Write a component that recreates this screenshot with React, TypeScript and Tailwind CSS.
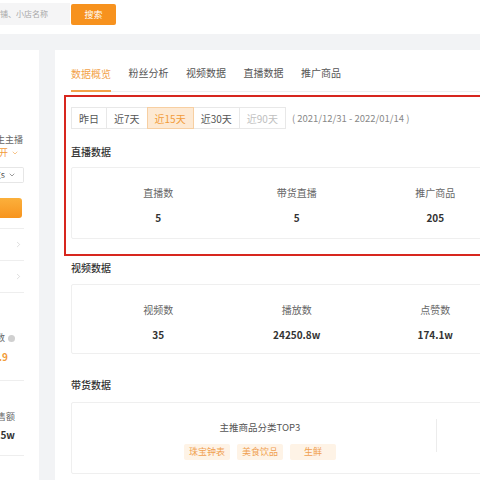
import React from "react";
import { ChevronDown, ChevronRight } from "lucide-react";

function StatCard({ items, tall }: { items: [string, string][]; tall: boolean }) {
  return (
    <div
      className={
        tall
          ? "border border-[#efefef] rounded-[2px] pl-[17px] grid grid-cols-[138.5px_138.5px_138.5px] h-[72px]"
          : "border border-[#efefef] rounded-[2px] pl-[17px] grid grid-cols-[138.5px_138.5px_138.5px] h-[70px]"
      }
    >
      {items.map(([l, v]) => (
        <div key={l} className="flex flex-col items-center pt-[18px]">
          <div className="text-[10px] leading-[14px] text-[#666]">{l}</div>
          <div className="mt-[11px] text-[10px] leading-[14px] font-bold text-[#333]">{v}</div>
        </div>
      ))}
    </div>
  );
}

export default function App() {
  const tabs = ["数据概览", "粉丝分析", "视频数据", "直播数据", "推广商品"];
  const ranges = ["昨日", "近7天", "近15天", "近30天", "近90天"];
  return (
    <div className="w-[480px] h-[480px] overflow-hidden bg-[#f2f3f5] font-['Noto_Sans_CJK_SC','Noto_Sans',sans-serif]">
      {/* top bar */}
      <div className="h-[34px] bg-white flex items-start pt-[3px]">
        <div className="w-[70px] h-[22px] bg-[#f5f5f6] flex items-center justify-end pr-[22px] overflow-hidden whitespace-nowrap">
          <span className="text-[8px] text-[#a8a8a8] shrink-0">搜索抖音号、店铺、小店名称</span>
        </div>
        <div className="ml-[1px] mt-[1px] w-[45px] h-[21px] bg-[#f7921e] rounded-[2px] flex items-center justify-center text-[9px] text-white">
          搜索
        </div>
      </div>

      <div className="flex pt-[16px]">
        {/* sidebar */}
        <div className="w-[39px] h-[430px] bg-white shrink-0 overflow-hidden flex flex-col whitespace-nowrap">
          <div className="mt-[84px] pr-[16px] flex justify-end text-[9px] leading-[12px] text-[#666]">
            <span className="shrink-0">带货达人·女生主播</span>
          </div>
          <div className="mt-[1px] pr-[20px] flex justify-end items-center text-[9px] leading-[12px] text-[#f29b38]">
            <span className="shrink-0">展开</span>
            <ChevronDown size={8} strokeWidth={1.75} className="ml-[3px] shrink-0" />
          </div>
          <div className="mt-[8px] mr-[15px] h-[16px] border border-[#e6e6e6] border-l-0 rounded-r-[2px] flex justify-end items-center pr-[7px] text-[9px] text-[#555]">
            <span className="shrink-0">粉丝数s</span>
            <ChevronDown size={8} strokeWidth={1.75} className="ml-[3px] shrink-0" />
          </div>
          <div className="mt-[15px] mr-[17px] h-[20px] rounded-r-[3px] bg-gradient-to-b from-[#fbb03b] to-[#f7941d]" />
          <div className="mt-[10px] mr-[15px] border-b border-[#eeeeee]" />
          <div className="mr-[15px] h-[32px] border-b border-[#eeeeee] flex items-center justify-end pr-[1px]">
            <ChevronRight size={9} strokeWidth={1.5} className="text-[#c4c4c4] shrink-0" />
          </div>
          <div className="mr-[15px] h-[32px] border-b border-[#eeeeee] flex items-center justify-end pr-[1px]">
            <ChevronRight size={9} strokeWidth={1.5} className="text-[#c4c4c4] shrink-0" />
          </div>
          <div className="mt-[39px] pr-[24px] flex justify-end items-center text-[9px] leading-[12px] text-[#666]">
            <span className="shrink-0">口碑分数</span>
            <span className="ml-[3px] w-[7px] h-[7px] rounded-full bg-[#d0d0d0] shrink-0" />
          </div>
          <div className="mt-[6px] pr-[31px] flex justify-end text-[10px] leading-[14px] font-bold text-[#f29b38]">
            <span className="shrink-0">4.9</span>
          </div>
          <div className="mt-[16px] mr-[15px] border-b border-[#eeeeee]" />
          <div className="mt-[30px] pr-[24px] flex justify-end text-[9px] leading-[12px] text-[#666]">
            <span className="shrink-0">场均销售额</span>
          </div>
          <div className="mt-[5px] pr-[24px] flex justify-end text-[10px] leading-[14px] font-bold text-[#333]">
            <span className="shrink-0">12.5w</span>
          </div>
          <div className="mt-[13px] mr-[15px] border-b border-[#eeeeee]" />
        </div>

        {/* main card */}
        <div className="ml-[16px] w-[470px] h-[430px] bg-white shrink-0 px-[16px]">
          {/* tabs */}
          <div className="h-[42px] flex items-end gap-[17.5px] border-b border-[#efefef]">
            {tabs.map((t, i) => (
              <div
                key={t}
                className={
                  i === 0
                    ? "h-[41px] pt-[16px] text-[10px] leading-[14px] text-[#f2a24a] border-b-2 border-[#f2a24a] -mb-px"
                    : "h-[41px] pt-[16px] text-[10px] leading-[14px] text-[#555]"
                }
              >
                {t}
              </div>
            ))}
          </div>

          {/* red highlight */}
          <div className="mt-[3px] -ml-[7px] border-2 border-[#d7261e] pl-[5px] pt-[10px] pb-[15px]">
            <div className="flex items-center">
              {ranges.map((r, i) => (
                <div
                  key={r}
                  className={
                    i === 2
                      ? "h-[22px] px-[7px] flex items-center text-[10px] bg-[#fde9d3] text-[#f29b38] border border-[#f7cfa2] -ml-px relative"
                      : i === 4
                      ? "h-[22px] px-[7px] flex items-center text-[10px] text-[#c0c0c0] border border-[#e8e8e8] -ml-px"
                      : "h-[22px] px-[7px] flex items-center text-[10px] text-[#555] border border-[#e8e8e8] -ml-px first:ml-0"
                  }
                >
                  {r}
                </div>
              ))}
              <span className="ml-[6px] text-[9.5px] text-[#888]">( 2021/12/31 - 2022/01/14 )</span>
            </div>
            <div className="mt-[16px] text-[10px] leading-[14px] font-medium text-[#333]">直播数据</div>
            <div className="mt-[8px]">
              <StatCard
                tall
                items={[
                  ["直播数", "5"],
                  ["带货直播", "5"],
                  ["推广商品", "205"],
                ]}
              />
            </div>
          </div>

          <div className="mt-[5px] text-[10px] leading-[14px] font-medium text-[#333]">视频数据</div>
          <div className="mt-[9px]">
            <StatCard
              tall={false}
              items={[
                ["视频数", "35"],
                ["播放数", "24250.8w"],
                ["点赞数", "174.1w"],
              ]}
            />
          </div>

          <div className="mt-[24px] text-[10px] leading-[14px] font-medium text-[#333]">带货数据</div>
          <div className="mt-[10px] h-[72px] border border-[#efefef] rounded-[2px] flex">
            <div className="w-[364px] pl-[12px] flex flex-col items-center pt-[17px]">
              <div className="text-[9.5px] leading-[14px] text-[#555]">主推商品分类TOP3</div>
              <div className="mt-[10px] flex gap-[7px]">
                {["珠宝钟表", "美食饮品", "生鲜"].map((t) => (
                  <div
                    key={t}
                    className="w-[46px] h-[16px] bg-[#fef3e6] text-[#f0a050] text-[9px] flex items-center justify-center rounded-[2px]"
                  >
                    {t}
                  </div>
                ))}
              </div>
            </div>
            <div className="mt-[16px] h-[33px] border-l border-[#ececec]" />
          </div>
        </div>
      </div>
    </div>
  );
}
